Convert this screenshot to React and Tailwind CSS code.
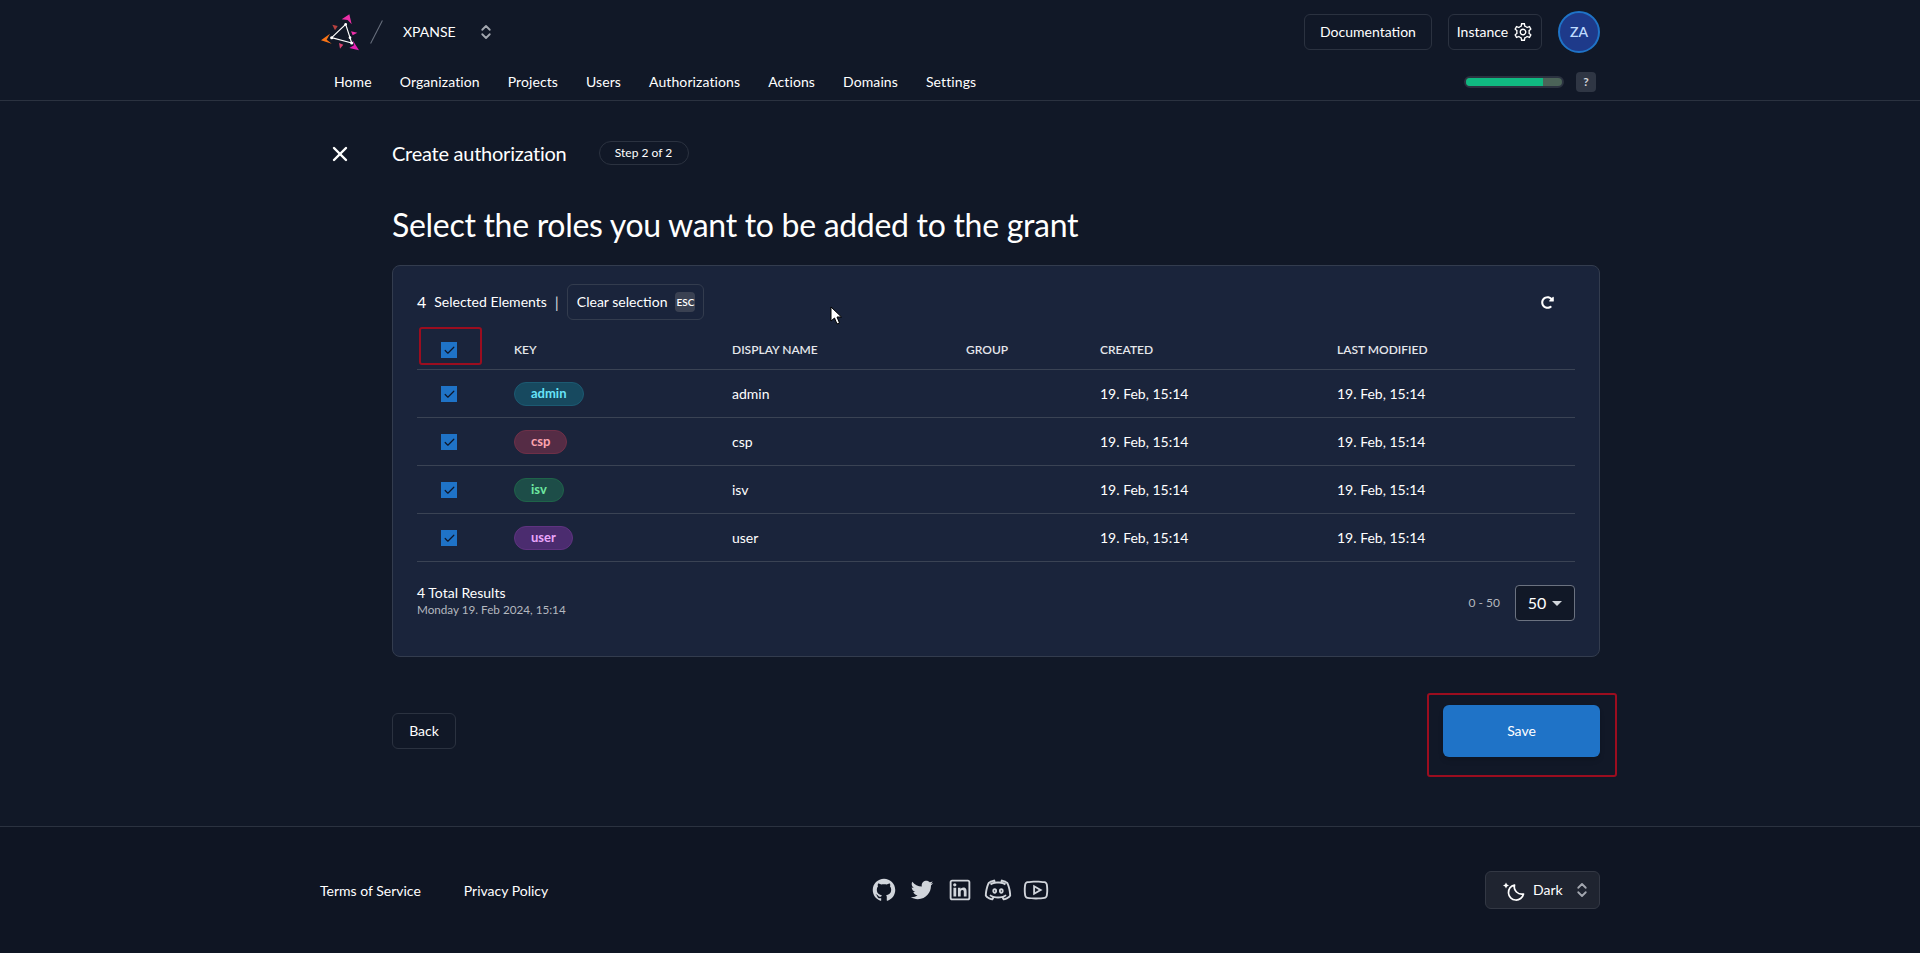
import { X, ChevronsUpDown, Check } from "lucide-react";
import { FaRedoAlt } from "react-icons/fa";
import { LiaGithub, LiaTwitter, LiaLinkedin, LiaDiscord, LiaYoutube, LiaCogSolid } from "react-icons/lia";

const NAV = ["Home", "Organization", "Projects", "Users", "Authorizations", "Actions", "Domains", "Settings"];

const ROLES = [
  { key: "admin", cls: "bg-[#17495f] border-[#1c5a72] text-[#67e3f9]" },
  { key: "csp", cls: "bg-[#552c45] border-[#6e3048] text-[#fda4af]" },
  { key: "isv", cls: "bg-[#1d4d48] border-[#1f6349] text-[#6ee7a0]" },
  { key: "user", cls: "bg-[#4b2c6f] border-[#5f3380] text-[#e9a5fb]" },
];

const COLS = "grid grid-cols-[97px_218px_234px_134px_237px_1fr] items-center";

const Logo = () => (
  <svg width="40" height="40" viewBox="30 20 120 120">
    <path d="M95 42 L118 27 L125 57 L113 44 Z" fill="#ec2fa8" />
    <path d="M33 105 L60 85 L50 103 L65 115 Z" fill="#f97316" />
    <path d="M147 135 L118 128 L132 120 L128 105 Z" fill="#e620b4" />
    <path d="M67 58 L83 62 L75 75 Z" fill="#b8413f" />
    <path d="M123 78 L142 82 L128 90 Z" fill="#ec2fa8" />
    <path d="M87 113 L100 118 L90 130 Z" fill="#d8446e" />
    <path d="M65 97 L107 57 L120 97 L125 113 Z" fill="none" stroke="#fff" strokeWidth="3.5" />
    <circle cx="65" cy="97" r="4.5" fill="#fff" />
    <circle cx="107" cy="57" r="4" fill="#fff" />
    <circle cx="120" cy="97" r="4" fill="#fff" />
    <circle cx="125" cy="113" r="4.5" fill="#fff" />
  </svg>
);

const Checkbox = () => (
  <span className="flex h-4 w-4 items-center justify-center bg-[#1f73c7]">
    <Check size={13} strokeWidth={2.2} className="text-[#0f172a]" />
  </span>
);

const MoonSpark = () => (
  <svg width="22" height="22" viewBox="0 0 22 22" fill="none" className="overflow-visible">
    <path d="M12.5 6 A7.6 7.6 0 1 0 21.5 15 A7.5 7.5 0 0 1 12.5 6 Z" stroke="currentColor" strokeWidth="1.7" strokeLinejoin="round" />
    <path d="M4 3.5 L5 5.5 L7 6.5 L5 7.5 L4 9.5 L3 7.5 L1 6.5 L3 5.5 Z" fill="currentColor" />
  </svg>
);

const Cursor = () => (
  <svg width="13" height="19" viewBox="0 0 13 19" className="absolute left-[510px] top-[205px] z-10">
    <path d="M1 1 V15 L4.5 12 L7 18 L9.5 17 L7 11 H11.5 Z" fill="#fff" stroke="#000" strokeWidth="1" />
  </svg>
);

export default function App() {
  return (
    <div className="min-h-[953px] bg-[#111827] text-white font-['Lato','Liberation_Sans',sans-serif]">
      <header className="h-[101px] border-b border-[#2b3240]">
        <div className="mx-auto w-[1280px]">
          <div className="flex h-[64px] items-center">
            <Logo />
            <div className="ml-[16px] h-[26px] w-px rotate-[27deg] bg-[#6b7280]" />
            <span className="ml-[26px] text-sm">XPANSE</span>
            <ChevronsUpDown size={18} strokeWidth={2.4} className="ml-[21px] text-[#a3a7af]" />
            <div className="ml-auto flex items-center gap-4">
              <button className="h-[36px] w-[128px] rounded-md border border-[#2b3240] text-sm">Documentation</button>
              <button className="flex h-[36px] w-[94px] items-center justify-center gap-1 rounded-md border border-[#2b3240] pl-px text-sm">
                Instance
                <LiaCogSolid size={22} />
              </button>
              <div className="flex h-[42px] w-[42px] items-center justify-center rounded-full border-2 border-[#1f73c7] bg-[#1e3a8a] text-sm font-semibold text-[#bfdbfe]">
                ZA
              </div>
            </div>
          </div>
          <div className="flex h-[36px] items-center pl-[14px] text-sm">
            <nav className="flex gap-[28px] tracking-[0.1px]">
              {NAV.map((item) => (
                <a key={item}>{item}</a>
              ))}
            </nav>
            <div className="ml-auto mr-1 flex items-center gap-3">
              <div className="h-[12px] w-[100px] rounded-full border-2 border-[#2b3240] bg-[#4b6358]">
                <div className="h-full w-[80%] rounded-l-full bg-[#10b981]" />
              </div>
              <span className="flex h-5 w-5 items-center justify-center rounded-sm bg-[#2f3644] text-xs font-bold text-[#d1d5db]">?</span>
            </div>
          </div>
        </div>
      </header>

      <main className="relative mx-auto h-[725px] w-[1280px] pl-[72px]">
        <Cursor />
        <div className="relative flex h-[48px] items-center pt-[28px] box-content">
          <X size={24} strokeWidth={2.4} className="absolute left-[-64px] top-[41px]" />
          <h2 className="text-xl leading-7 tracking-[-0.25px]">Create authorization</h2>
          <span className="ml-[32px] flex h-[24px] w-[90px] items-center justify-center rounded-full border border-[#2b3240] text-xs">Step 2 of 2</span>
        </div>
        <h1 className="mt-[28px] text-[32px] leading-[40px] tracking-[-0.3px]">Select the roles you want to be added to the grant</h1>

        <section className="mt-[20px] h-[392px] rounded-lg border border-[#333c4e] bg-[#1a243b] px-6 pt-[18px]">
          <div className="flex h-[36px] items-center">
            <span className="text-base">4</span>
            <span className="ml-2 text-sm">Selected Elements</span>
            <span className="ml-2 text-base text-[#d1d5db]">|</span>
            <button className="ml-2 flex h-[36px] w-[137px] items-center gap-2 rounded-md border border-[#333c4e] pl-[9px] text-sm">
              Clear selection
              <span className="flex h-5 w-5 items-center justify-center rounded-sm bg-[#3a4152] text-[10px] font-semibold">ESC</span>
            </button>
            <FaRedoAlt size={13} className="ml-auto mr-[21px]" />
          </div>

          <div className={`${COLS} relative mt-[11px] h-[39px] border-b border-[#3a4354] text-xs font-semibold text-[#e5e7eb]`}>
            <div className="pl-[24px]">
              <Checkbox />
            </div>
            <div className="absolute left-[2px] top-[-4px] h-[38px] w-[63px] rounded-[3px] border-2 border-[#9b0d1f]" />
            <span>KEY</span>
            <span>DISPLAY NAME</span>
            <span>GROUP</span>
            <span>CREATED</span>
            <span>LAST MODIFIED</span>
          </div>

          {ROLES.map((role) => (
            <div key={role.key} className={`${COLS} h-[48px] border-b border-[#3a4354] text-sm`}>
              <div className="pl-[24px] pt-px">
                <Checkbox />
              </div>
              <div>
                <span className={`inline-flex h-[24px] items-center rounded-full border px-4 text-[13px] font-bold ${role.cls}`}>{role.key}</span>
              </div>
              <span>{role.key}</span>
              <span />
              <span>19. Feb, 15:14</span>
              <span>19. Feb, 15:14</span>
            </div>
          ))}

          <div className="mt-[22px] flex items-start">
            <div>
              <p className="text-sm leading-[18px]">4 Total Results</p>
              <p className="text-[11.7px] leading-[14px] text-[#b4b8bf]">Monday 19. Feb 2024, 15:14</p>
            </div>
            <div className="ml-auto mt-px flex items-center gap-[15px]">
              <span className="text-xs text-[#b4b8bf]">0 - 50</span>
              <div className="flex h-[36px] w-[60px] items-center justify-center gap-1.5 rounded-sm border border-[#6b7280] bg-[#111827] text-base">
                50
                <span className="h-0 w-0 border-x-[5px] border-t-[5px] border-x-transparent border-t-[#d1d5db]" />
              </div>
            </div>
          </div>
        </section>

        <div className="mt-[48px] flex items-center justify-between">
          <button className="h-[36px] w-[64px] rounded-md border border-[#2b3240] text-sm">Back</button>
          <div className="relative">
            <button className="h-[52px] w-[157px] rounded-md bg-[#1f73c7] text-sm shadow-md">Save</button>
            <div className="absolute left-[-16px] top-[-12px] h-[84px] w-[190px] rounded-[3px] border-2 border-[#9b0d1f]" />
          </div>
        </div>
      </main>

      <footer className="h-[127px] border-t border-[#2b3240] bg-[#0f1523]">
        <div className="mx-auto flex h-[126px] w-[1280px] items-center text-sm">
          <div className="flex w-[549px] gap-[43px] pt-[2px]">
            <a>Terms of Service</a>
            <a>Privacy Policy</a>
          </div>
          <div className="flex items-center gap-2 text-[#d1d5db]">
            <LiaGithub size={30} />
            <LiaTwitter size={30} />
            <LiaLinkedin size={30} />
            <LiaDiscord size={30} />
            <LiaYoutube size={30} />
          </div>
          <button className="ml-auto flex h-[38px] w-[115px] items-center gap-[9px] rounded-md border border-[#333844] bg-[#1f2430] pl-[16px]">
            <MoonSpark />
            Dark
            <ChevronsUpDown size={18} strokeWidth={2.4} className="ml-px text-[#a3a7af]" />
          </button>
        </div>
      </footer>
    </div>
  );
}
